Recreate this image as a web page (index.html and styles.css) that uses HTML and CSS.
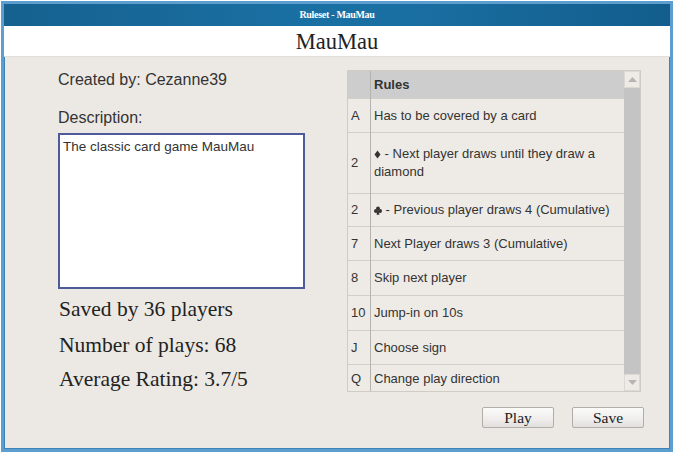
FILE: index.html
```html
<!DOCTYPE html>
<html>
<head>
<meta charset="utf-8">
<link rel="stylesheet" href="styles.css">
</head>
<body>
<div class="window">
  <div class="titlebar">Ruleset - MauMau</div>
  <div class="header">MauMau</div>
  <div class="content">
    <div class="left">
      <div class="label created">Created by: Cezanne39</div>
      <div class="label desc">Description:</div>
      <div class="textarea">The classic card game MauMau</div>
      <div class="stat saved">Saved by 36 players</div>
      <div class="stat plays">Number of plays: 68</div>
      <div class="stat rating">Average Rating: 3.7/5</div>
    </div>
    <div class="right">
      <div class="grid">
        <div class="table-wrap">
          <table class="rules">
            <thead>
              <tr><th class="idx"></th><th>Rules</th></tr>
            </thead>
            <tbody>
              <tr><td class="idx">A</td><td>Has to be covered by a card</td></tr>
              <tr class="tall"><td class="idx">2</td><td><svg class="suit" width="7" height="9" viewBox="0 0 7 9"><path d="M3.5 0.5 L6.5 4.5 L3.5 8.5 L0.5 4.5 Z" fill="#333"/></svg> - Next player draws until they draw a diamond</td></tr>
              <tr class="r33"><td class="idx">2</td><td><svg class="suit" width="8" height="9" viewBox="0 0 8 9"><circle cx="4" cy="2.3" r="1.9" fill="#333"/><circle cx="1.9" cy="5" r="1.9" fill="#333"/><circle cx="6.1" cy="5" r="1.9" fill="#333"/><path d="M3.4 4 L4.6 4 L5.4 8.8 L2.6 8.8 Z" fill="#333"/></svg> - Previous player draws 4 (Cumulative)</td></tr>
              <tr><td class="idx">7</td><td>Next Player draws 3 (Cumulative)</td></tr>
              <tr class="r35"><td class="idx">8</td><td>Skip next player</td></tr>
              <tr class="r35"><td class="idx">10</td><td>Jump-in on 10s</td></tr>
              <tr><td class="idx">J</td><td>Choose sign</td></tr>
              <tr class="last"><td class="idx">Q</td><td>Change play direction</td></tr>
            </tbody>
          </table>
        </div>
        <div class="scrollbar">
          <div class="sb-btn up"><svg width="9" height="5" viewBox="0 0 9 5"><path d="M0 5 L4.5 0 L9 5 Z" fill="#b5b5b5"/></svg></div>
          <div class="sb-track"></div>
          <div class="sb-btn down"><svg width="9" height="5" viewBox="0 0 9 5"><path d="M0 0 L4.5 5 L9 0 Z" fill="#b5b5b5"/></svg></div>
        </div>
      </div>
      <div class="buttons">
        <button class="btn">Play</button>
        <button class="btn">Save</button>
      </div>
    </div>
  </div>
</div>
</body>
</html>
```

FILE: styles.css
```css
html, body {
  margin: 0;
  padding: 0;
  background: #ffffff;
}
body {
  padding: 1px 0 0 1px;
}
.window {
  box-sizing: border-box;
  width: 672px;
  height: 451px;
  border: 3px solid #5c9ecf;
  box-shadow: inset 0 0 0 1px #3e83b8;
  background: #ece9e4;
  display: flex;
  flex-direction: column;
}
.titlebar {
  height: 22px;
  flex: none;
  background: linear-gradient(to right, #15618f 0%, #1a70a3 45%, #1a6fa2 60%, #125d8c 100%);
  color: #ffffff;
  font-family: "Liberation Serif", serif;
  font-weight: bold;
  font-size: 10px;
  line-height: 22px;
  text-align: center;
  letter-spacing: -0.3px;
}
.header {
  height: 30px;
  flex: none;
  background: #ffffff;
  font-family: "Liberation Serif", serif;
  font-size: 22.5px;
  color: #222222;
  text-align: center;
  line-height: 32px;
  border-bottom: 1px solid #e2dfda;
}
.content {
  flex: 1;
  display: flex;
  padding: 13px 0 0 0;
}
.left {
  width: 343px;
  box-sizing: border-box;
  padding-left: 54px;
  display: flex;
  flex-direction: column;
}
.label {
  font-family: "Liberation Sans", Arial, sans-serif;
  font-size: 16px;
  color: #333333;
  line-height: 18px;
}
.created {
  margin-top: 1px;
}
.desc {
  margin-top: 20px;
}
.textarea {
  margin-top: 6px;
  width: 247px;
  height: 156px;
  box-sizing: border-box;
  border: 2px solid #4d5c99;
  background: #ffffff;
  font-family: "Liberation Sans", Arial, sans-serif;
  font-size: 13.5px;
  color: #333333;
  padding: 4px 3px;
  line-height: 16px;
}
.stat {
  font-family: "Liberation Serif", serif;
  font-size: 21.5px;
  color: #222222;
  line-height: 24px;
  padding-left: 1px;
}
.saved {
  margin-top: 8px;
}
.plays {
  margin-top: 12px;
}
.rating {
  margin-top: 10px;
}
.right {
  width: 297px;
  display: flex;
  flex-direction: column;
}
.grid {
  display: flex;
  height: 322px;
  width: 294px;
  box-sizing: border-box;
  border: 1px solid #cfcbc5;
  overflow: hidden;
}
.table-wrap {
  flex: 1;
  overflow: hidden;
}
.rules {
  border-collapse: collapse;
  width: 100%;
  font-family: "Liberation Sans", Arial, sans-serif;
  font-size: 13px;
  color: #333333;
}
.rules th {
  height: 27px;
  background: #cdcdcd;
  text-align: left;
  font-weight: bold;
  padding: 0 0 0 3px;
  border-left: 1px solid #b5b3b0;
}
.rules th.idx, .rules td.idx {
  width: 18px;
  border-left: none;
  padding-left: 3px;
  padding-right: 1px;
}
.rules td {
  height: 33px;
  background: #eeebe6;
  border-top: 1px solid #d2cfca;
  border-left: 1px solid #b5b3b0;
  padding: 0 4px 0 3px;
  vertical-align: middle;
  line-height: 18px;
}
.rules tr.tall td {
  height: 60px;
}
.rules tr.r33 td {
  height: 32px;
}
.rules tr.r35 td {
  height: 34px;
}
.rules tr.last td {
  height: 27px;
}
.suit {
  vertical-align: -1px;
}
.scrollbar {
  width: 16px;
  flex: none;
  display: flex;
  flex-direction: column;
  background: #c4c4c4;
}
.sb-btn {
  height: 17px;
  flex: none;
  background: #eeebe7;
  border: 1px solid #dcd9d4;
  box-sizing: border-box;
  display: flex;
  align-items: center;
  justify-content: center;
}
.sb-track {
  flex: 1;
  background: #c4c4c4;
}
.buttons {
  display: flex;
  justify-content: flex-end;
  gap: 18px;
  margin-top: 15px;
}
.btn {
  width: 72px;
  height: 21px;
  border: 1px solid #b0adaa;
  border-radius: 2px;
  background: linear-gradient(to bottom, #fbfbfa 0%, #eeedeb 60%, #e2e0dd 100%);
  font-family: "Liberation Serif", serif;
  font-size: 15.5px;
  color: #222222;
  padding: 0;
  line-height: 18px;
}
```
